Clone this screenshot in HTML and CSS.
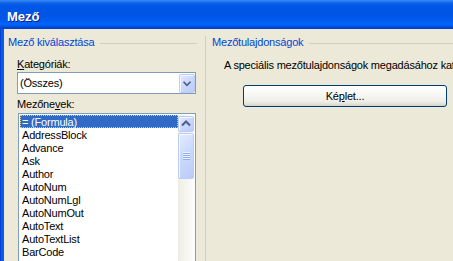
FILE: index.html
```html
<!DOCTYPE html>
<html lang="hu">
<head>
<meta charset="utf-8">
<title>Mező</title>
<link rel="stylesheet" href="styles.css">
</head>
<body>
<div class="window">
  <div class="titlebar">Mező</div>
  <div class="body">
    <div class="frame-left"></div>
    <div class="content">
      <section class="group group-select">
        <div class="group-header"><span class="group-title">Mező kiválasztása</span><span class="group-line"></span></div>
        <div class="field-label label-cat"><u>K</u>ategóriák:</div>
        <div class="combo">
          <span class="combo-text">(Összes)</span>
          <span class="xp-btn combo-btn">
            <svg width="16" height="19" viewBox="0 0 16 19"><path d="M4 7.5 L8 11.5 L12 7.5" fill="none" stroke="#4D6185" stroke-width="2"/></svg>
          </span>
        </div>
        <div class="field-label label-names">Mezőne<u>v</u>ek:</div>
        <div class="listbox">
          <ul class="items">
            <li class="selected">= (Formula)</li>
            <li>AddressBlock</li>
            <li>Advance</li>
            <li>Ask</li>
            <li>Author</li>
            <li>AutoNum</li>
            <li>AutoNumLgl</li>
            <li>AutoNumOut</li>
            <li>AutoText</li>
            <li>AutoTextList</li>
            <li>BarCode</li>
            <li>BidiOutline</li>
          </ul>
          <div class="scrollbar">
            <span class="xp-btn sb-up">
              <svg width="14" height="14" viewBox="0 0 14 14"><path d="M3 8.5 L7 4.5 L11 8.5" fill="none" stroke="#4D6185" stroke-width="2"/></svg>
            </span>
            <span class="xp-btn sb-thumb">
              <svg width="7" height="8" viewBox="0 0 7 8">
                <rect x="0" y="0" width="7" height="1" fill="#EEF4FE"/>
                <rect x="0" y="1" width="7" height="1" fill="#8CAEF3"/>
                <rect x="0" y="2" width="7" height="1" fill="#EEF4FE"/>
                <rect x="0" y="3" width="7" height="1" fill="#8CAEF3"/>
                <rect x="0" y="4" width="7" height="1" fill="#EEF4FE"/>
                <rect x="0" y="5" width="7" height="1" fill="#8CAEF3"/>
                <rect x="0" y="6" width="7" height="1" fill="#EEF4FE"/>
                <rect x="0" y="7" width="7" height="1" fill="#8CAEF3"/>
              </svg>
            </span>
          </div>
        </div>
      </section>
      <div class="divider"></div>
      <section class="group group-props">
        <div class="group-header"><span class="group-title">Mezőtulajdonságok</span><span class="group-line"></span></div>
        <p class="props-text">A speciális mezőtulajdonságok megadásához kattintson a Képlet gombra.</p>
        <button class="xp-button" type="button">Ké<u>p</u>let...</button>
      </section>
    </div>
  </div>
</div>
</body>
</html>
```
FILE: styles.css
```css
html, body {
  margin: 0;
  padding: 0;
}
body {
  width: 453px;
  height: 261px;
  overflow: hidden;
  font-family: "Liberation Sans", Arial, sans-serif;
  font-size: 11px;
  letter-spacing: -0.2px;
  color: #000;
}
.window {
  width: 453px;
  height: 261px;
  display: flex;
  flex-direction: column;
  overflow: hidden;
  background: #ECE9D8;
}
.titlebar {
  flex: none;
  height: 29px;
  box-sizing: border-box;
  padding: 9px 0 0 7px;
  font-size: 13px;
  font-weight: bold;
  letter-spacing: 0;
  line-height: 15px;
  color: #fff;
  text-shadow: 1px 1px 0 #0A1E8A;
  background: linear-gradient(to bottom,
    #3C8CF6 0px, #2A7BF2 1px, #0D62E8 3px, #0056E6 6px,
    #0055E5 16px, #005CF0 21px, #0064F8 24px, #005AF0 26px,
    #0048D8 27px, #003FCC 29px);
}
.body {
  flex: 1;
  display: flex;
  min-height: 0;
}
.frame-left {
  flex: none;
  width: 4px;
  background: linear-gradient(to right, #0840D6 0, #0840D6 1px, #0A5AEA 1px, #0A5AEA 4px);
}
.content {
  flex: 1;
  display: flex;
  padding: 7px 0 0 4px;
  min-width: 0;
}
.group {
  display: flex;
  flex-direction: column;
  min-width: 0;
}
.group-select {
  flex: none;
  width: 189px;
}
.group-props {
  flex: 1;
  padding-left: 6px;
  overflow: visible;
}
.group-header {
  display: flex;
  height: 13px;
  line-height: 13px;
  color: #0046D5;
  white-space: nowrap;
}
.group-line {
  flex: 1;
  height: 1px;
  margin: 7px 0 0 6px;
  background: #D0D0BF;
}
.group-props .group-line {
  margin-right: -40px;
}
.divider {
  flex: none;
  width: 1px;
  margin-left: 8px;
  background: #D0D0BF;
}
.field-label {
  line-height: 13px;
  height: 13px;
  padding-left: 9px;
}
.field-label u {
  text-underline-offset: 1px;
}
.label-cat {
  margin: 9px 0 1px;
}
.label-names {
  margin: 4px 0 2px;
}
.combo {
  margin-left: 9px;
  width: 179px;
  height: 22px;
  box-sizing: border-box;
  border: 1px solid #7F9DB9;
  background: #fff;
  padding: 1px 0 0 1px;
  display: flex;
}
.combo-text {
  flex: 1;
  padding-left: 1px;
  line-height: 19px;
}
.xp-btn {
  display: flex;
  align-items: center;
  justify-content: center;
  box-sizing: border-box;
  border: 1px solid #BBCDF5;
  border-radius: 2px;
  background: linear-gradient(135deg, #E4ECFE 0%, #CBD9FD 45%, #B9CCF8 100%);
  box-shadow: inset 1px 1px 0 #F4F7FF;
}
.combo-btn {
  flex: none;
  width: 16px;
  height: 19px;
}
.listbox {
  flex: 1;
  margin-left: 10px;
  width: 178px;
  box-sizing: border-box;
  border: 1px solid #7F9DB9;
  border-bottom: none;
  background: #fff;
  padding: 1px 0 0 1px;
  display: flex;
  overflow: hidden;
}
.items {
  flex: none;
  width: 158px;
  margin: 0;
  padding: 0;
  list-style: none;
}
.items li {
  height: 12px;
  padding: 1px 0 0 2px;
  line-height: 13px;
  white-space: nowrap;
}
.items li.selected {
  background: #316AC5;
  color: #fff;
  outline: 1px dotted #F2C75C;
  outline-offset: -1px;
}
.scrollbar {
  flex: none;
  width: 17px;
  box-sizing: border-box;
  padding: 1px 1px 0 0;
  display: flex;
  flex-direction: column;
  gap: 1px;
  background: linear-gradient(to right, #EEEDE5 0%, #F6F5F1 50%, #FDFDFB 100%);
}
.sb-up {
  width: 16px;
  height: 16px;
}
.sb-thumb {
  width: 16px;
  height: 46px;
}
.props-text {
  margin: 10px 0 0;
  padding-left: 12px;
  line-height: 13px;
  white-space: nowrap;
}
.xp-button {
  margin: 13px 0 0 31px;
  width: 204px;
  height: 22px;
  box-sizing: border-box;
  border: 1px solid #003C74;
  border-radius: 3px;
  padding: 0;
  font-family: inherit;
  font-size: 11px;
  letter-spacing: -0.2px;
  line-height: 20px;
  color: #000;
  text-align: center;
  background: linear-gradient(to bottom, #FFFFFF 0%, #FAFAF8 30%, #F0F0EA 75%, #E3E1D8 90%, #D6D0C5 100%);
}
.xp-button u {
  text-underline-offset: 1px;
}
```
